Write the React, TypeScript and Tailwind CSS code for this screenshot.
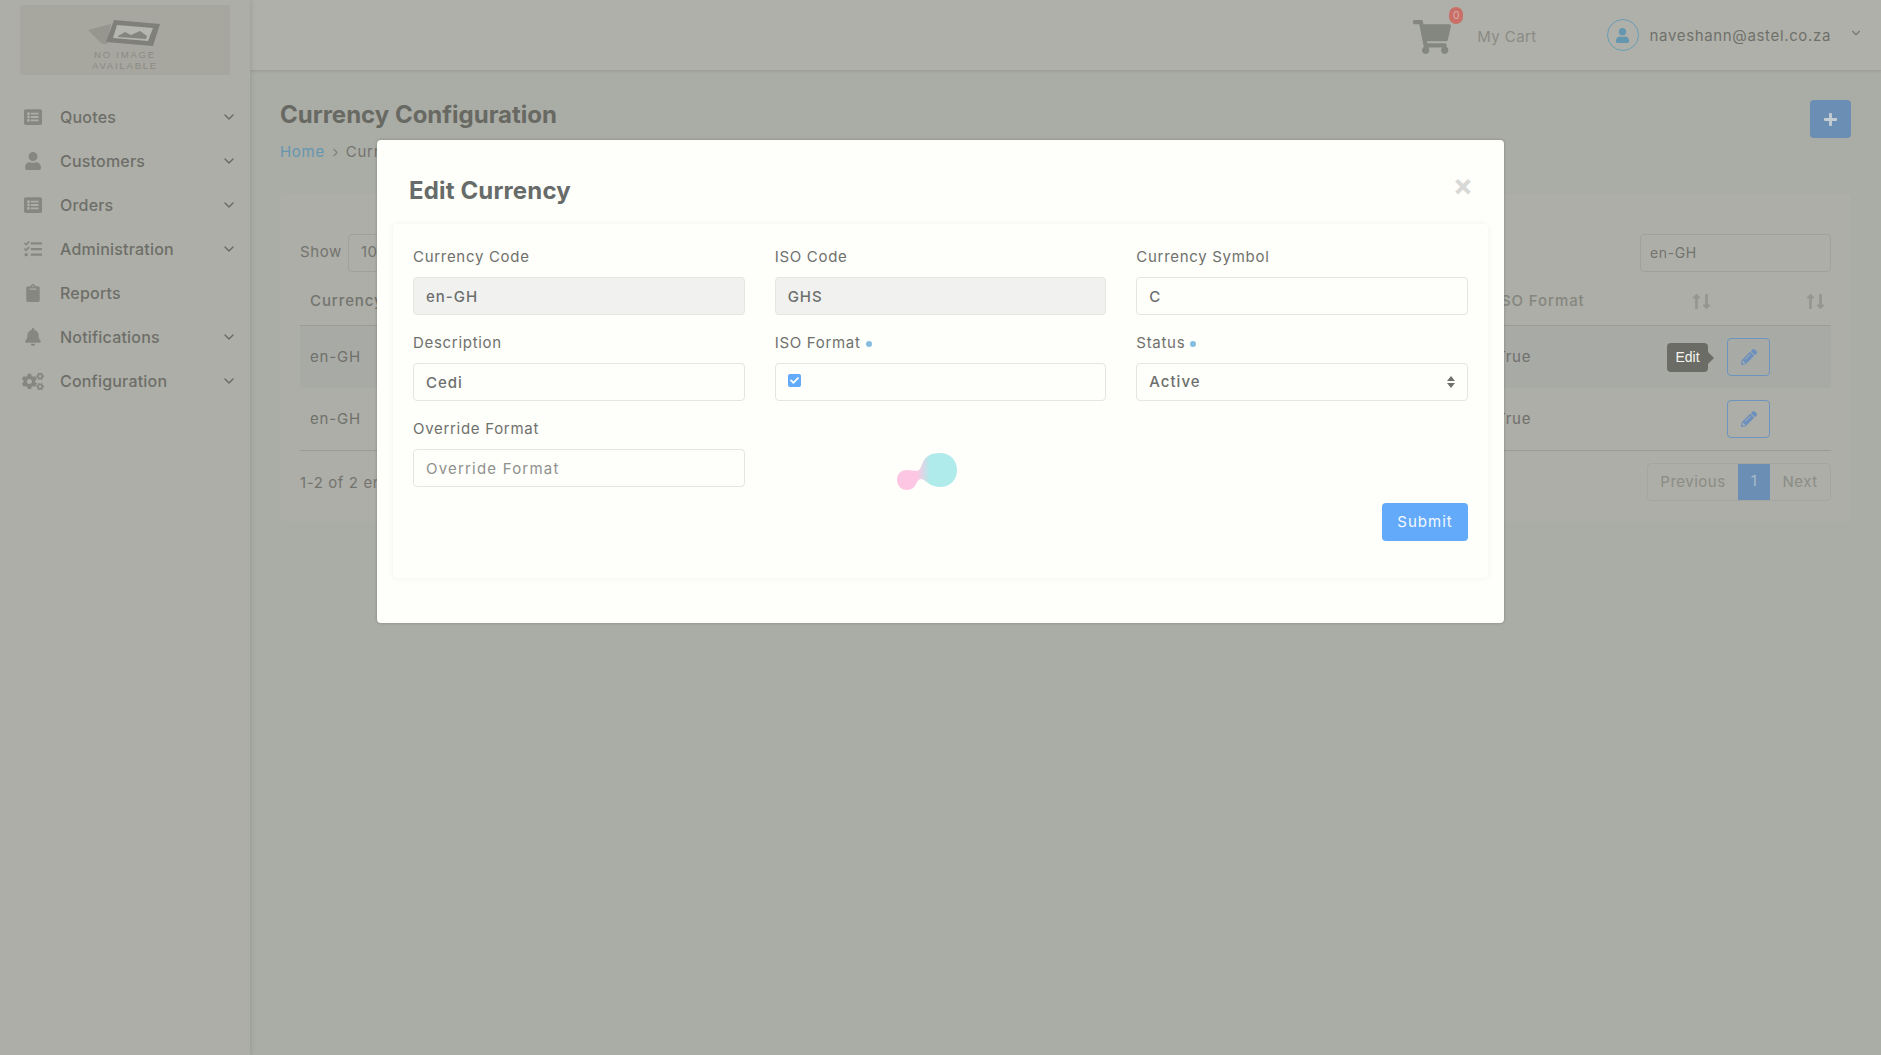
import { ChevronDown, ChevronRight } from "lucide-react";
import {
  FaListAlt, FaUser, FaTasks, FaClipboard, FaBell, FaCogs, FaShoppingCart,
  FaPencilAlt, FaPlus, FaLongArrowAltUp, FaLongArrowAltDown, FaCheck,
} from "react-icons/fa";

const menu = [
  { label: "Quotes", Icon: FaListAlt, chevron: true },
  { label: "Customers", Icon: FaUser, chevron: true },
  { label: "Orders", Icon: FaListAlt, chevron: true },
  { label: "Administration", Icon: FaTasks, chevron: true },
  { label: "Reports", Icon: FaClipboard, chevron: false },
  { label: "Notifications", Icon: FaBell, chevron: true },
  { label: "Configuration", Icon: FaCogs, chevron: true },
];

function Logo() {
  return (
    <div className="mx-[20px] mt-[5px] flex h-[70px] w-[210px] flex-col items-center bg-[#a7a69f]">
      <svg width="76" height="28" viewBox="0 0 76 28" className="mt-[14px]">
        <path d="M1 11 L24 5 L20 25 L15 25 Z" fill="#96968f" />
        <path d="M27 1 L73 5 L66 27 L19 23 Z" fill="#7f807a" />
        <path d="M30 6 L66 9 L61 22 L26 19 Z" fill="#b5b6af" />
        <path d="M31 17 L38 13 L44 16 L53 12 L60 17 L59 20 L31 18 Z" fill="#84857f" />
      </svg>
      <div className="mt-[3px] text-center font-['Liberation_Sans',sans-serif] text-[9.5px] leading-[10.5px] font-normal tracking-[1.8px] text-[#8a8b84]">
        NO IMAGE
        <br />
        AVAILABLE
      </div>
    </div>
  );
}

function Sidebar() {
  return (
    <aside className="z-10 h-[1055px] w-[250px] shrink-0 bg-[#adaea7] shadow-[1px_0_5px_rgba(0,0,0,0.1)]">
      <Logo />
      <nav className="mt-[20px]">
        {menu.map(({ label, Icon, chevron }) => (
          <div key={label} className="flex h-[44px] items-center pr-[13px] pl-[22px]">
            <span className="flex w-[22px] justify-center text-[#868880]">
              <Icon size={label === "Configuration" ? 23 : 18} />
            </span>
            <span className="mt-[-1px] ml-[16px] flex-1 text-[16px] font-medium tracking-[0.2px] text-[#6d6e69]">{label}</span>
            {chevron && <ChevronDown size={16} strokeWidth={2} className="text-[#686963]" />}
          </div>
        ))}
      </nav>
    </aside>
  );
}

function Header() {
  return (
    <header className="flex h-[70px] items-center justify-end bg-[#afb0a9] pr-[18px] shadow-[0_1px_3px_rgba(0,0,0,0.12)]">
      <div className="relative mt-[3px] mr-[26px] text-[#848780]">
        <FaShoppingCart size={38} />
        <span className="absolute top-[-11px] right-[-12px] flex h-[17px] w-[14px] items-center justify-center rounded-full bg-[#c96f68] text-[11px] text-[#dba9a3]">
          0
        </span>
      </div>
      <span className="mt-[5px] mr-[70px] text-[15px] tracking-[0.4px] text-[#8a8b85]">My Cart</span>
      <span className="flex h-[32px] w-[32px] items-center justify-center rounded-full border border-[#6a9db5] text-[#6596b0]">
        <FaUser size={15} />
      </span>
      <span className="mt-[2px] ml-[11px] text-[15px] tracking-[0.65px] text-[#6f706b]">naveshann@astel.co.za</span>
      <ChevronDown size={14} className="mt-[-4px] ml-[18px] text-[#777872]" />
    </header>
  );
}

function Sort() {
  return (
    <span className="flex justify-end text-[#94968f]">
      <FaLongArrowAltUp size={17} className="mr-[-7px]" />
      <FaLongArrowAltDown size={17} />
    </span>
  );
}

function EditButton() {
  return (
    <span className="flex h-[38px] w-[43px] items-center justify-center rounded-[4px] border border-[#6b95bf] text-[#6b90bd]">
      <FaPencilAlt size={16} />
    </span>
  );
}

function TableRow({ highlighted, tip }: { highlighted?: boolean; tip?: boolean }) {
  return (
    <div className={`grid h-[62px] grid-cols-[1186px_231px_1fr] items-center text-[15px] tracking-[0.8px] text-[#6f706b] ${highlighted ? "bg-[#a8aaa6]" : ""}`}>
      <span className="pt-[2px] pl-[10px]">en-GH</span>
      <span className="pt-[2px] pl-[10px]">True</span>
      <div className="relative pl-[10px]">
        <EditButton />
        {tip && (
          <div className="absolute top-[5px] left-[-50px] flex h-[29px] w-[41px] items-center justify-center rounded-[4px] bg-[#6b6c65] font-['Liberation_Sans',sans-serif] text-[14px] tracking-normal text-[#f5f5f0]">
            Edit
            <span className="absolute top-[9px] right-[-6px] h-0 w-0 border-y-[6px] border-l-[6px] border-y-transparent border-l-[#6b6c65]" />
          </div>
        )}
      </div>
    </div>
  );
}

function Main() {
  return (
    <div className="min-w-0 flex-1">
      <Header />
      <main className="px-[30px] pt-[30px]">
        <div className="flex items-start justify-between">
          <div>
            <h1 className="text-[24px] leading-[30px] font-bold text-[#686963]">Currency Configuration</h1>
            <div className="mt-[11px] flex items-center text-[15px] tracking-[0.7px]">
              <span className="text-[#6596b0]">Home</span>
              <ChevronRight size={13} className="mx-[4px] text-[#80817b]" />
              <span className="text-[#73746f]">Currency Configuration</span>
            </div>
          </div>
          <button className="flex h-[38px] w-[41px] items-center justify-center rounded-[4px] bg-[#6b8eb4] text-[#c4cdd2]">
            <FaPlus size={15} />
          </button>
        </div>
        <section className="mt-[30px] rounded-[4px] bg-[#adaea7] px-[20px] pt-[40px] pb-[20px] text-[15px] text-[#73746f]">
          <div className="flex items-center justify-between">
            <div className="flex items-center tracking-[0.6px]">
              <span>Show</span>
              <span className="ml-[6px] flex h-[38px] w-[80px] items-center rounded-[4px] border border-[#a0a19b] pl-[12px]">10</span>
            </div>
            <span className="flex h-[38px] w-[191px] items-center rounded-[4px] border border-[#a0a19b] pl-[9px] text-[14px] tracking-[0.6px]">en-GH</span>
          </div>
          <div className="mt-[7px] grid h-[47px] grid-cols-[1186px_231px_1fr] items-center border-b border-[#9a9b95] pb-[1px] font-medium tracking-[0.9px]">
            <span className="pl-[10px]">Currency Code</span>
            <div className="flex items-center justify-between pr-[2px] pl-[10px] text-[#85867f]"><span>ISO Format</span><Sort /></div>
            <div className="pr-[2px]"><Sort /></div>
          </div>
          <TableRow highlighted tip />
          <TableRow />
          <div className="flex items-center justify-between border-t border-[#9a9b95] pt-[12px]">
            <span className="mt-[4px] tracking-[0.6px]">1-2 of 2 entries</span>
            <div className="flex h-[38px] items-stretch rounded-[4px] border border-[#a5a69f] pt-[1px] tracking-[0.5px] text-[#8b8c86]">
              <span className="flex w-[90px] items-center justify-center">Previous</span>
              <span className="mt-[-1px] flex w-[32px] items-center justify-center bg-[#6b8eb4] text-[#a9bbcb]">1</span>
              <span className="flex w-[60px] items-center justify-center">Next</span>
            </div>
          </div>
        </section>
      </main>
    </div>
  );
}

function Field({ label, dot, children }: { label: string; dot?: boolean; children: React.ReactNode }) {
  return (
    <div>
      <div className="flex h-[24px] items-center pt-[2px] text-[15px] tracking-[0.7px] text-[#6f716d]">
        {label}
        {dot && <span className="mt-[2px] ml-[5px] h-[6px] w-[6px] rounded-full bg-[#84bde0]" />}
      </div>
      <div className="mt-[9px]">{children}</div>
    </div>
  );
}

function Box({ value, disabled, muted }: { value: string; disabled?: boolean; muted?: boolean }) {
  return (
    <div className={`flex h-[38px] items-center rounded-[4px] border border-[#e4e6e4] pt-[2px] pl-[12px] text-[15px] ${muted ? "font-normal tracking-[1.2px] text-[#8f918e]" : "font-medium tracking-[1px] text-[#6c6f6d]"} ${disabled ? "bg-[#f1f2f0]" : "bg-[#fefefa]"}`}>
      {value}
    </div>
  );
}

function Blob() {
  return (
    <svg width="64" height="40" viewBox="0 0 64 40">
      <defs>
        <linearGradient id="blobFill" x1="0" x2="1" y1="0" y2="0">
          <stop offset="0.34" stopColor="#fdc7e3" />
          <stop offset="0.55" stopColor="#aeebea" />
        </linearGradient>
      </defs>
      <path
        d="M11 38 C5 38 1 33 1 28 C1 22 5 18 11 18 C15 18 17 19 20 19 C24 19 25 15 27 10 C30 4 35 1 44 1 C54 1 61 8 61 18 C61 28 54 35 44 35 C36 35 32 31 28 28 C25 26 23 27 21 30 C19 35 16 38 11 38 Z"
        fill="url(#blobFill)"
      />
    </svg>
  );
}

function Modal() {
  return (
    <div className="absolute top-[140px] left-[377px] h-[483px] w-[1127px] rounded-[4px] bg-[#fefefa] px-[16px] shadow-[0_0_3px_rgba(0,0,0,0.25)]">
      <div className="flex h-[84px] items-start justify-between pr-[16px] pl-[16px]">
        <h2 className="mt-[33px] text-[24px] leading-[36px] font-bold tracking-[0.15px] text-[#676b69]">Edit Currency</h2>
        <span className="mt-[30px] mr-[-1px] text-[30px] leading-[30px] font-bold text-[#d8d9d6]">×</span>
      </div>
      <div className="relative h-[354px] rounded-[4px] bg-[#fefefa] px-[20px] pt-[20px] shadow-[0_0_6px_rgba(0,0,0,0.06)]">
        <div className="grid grid-cols-3 gap-x-[30px] gap-y-[15px]">
          <Field label="Currency Code"><Box value="en-GH" disabled /></Field>
          <Field label="ISO Code"><Box value="GHS" disabled /></Field>
          <Field label="Currency Symbol"><Box value="C" /></Field>
          <Field label="Description"><Box value="Cedi" /></Field>
          <Field label="ISO Format" dot>
            <div className="flex h-[38px] items-start rounded-[4px] border border-[#e4e6e4] pt-[10px] pl-[12px]">
              <span className="flex h-[13px] w-[13px] items-center justify-center rounded-[2px] bg-[#63aafa] text-white"><FaCheck size={9} /></span>
            </div>
          </Field>
          <Field label="Status" dot>
            <div className="flex h-[38px] items-center justify-between rounded-[4px] border border-[#e4e6e4] pr-[12px] pl-[12px] text-[15px] font-medium tracking-[1px] text-[#6c6f6d]">
              <span className="pt-[1px]">Active</span>
              <svg width="8" height="12" viewBox="0 0 8 12" fill="#6e706e"><path d="M4 0 L8 5 H0 Z M0 7 H8 L4 12 Z" /></svg>
            </div>
          </Field>
          <Field label="Override Format"><Box value="Override Format" muted /></Field>
          <div className="flex items-end justify-start pl-[121px]">
            <div className="mb-[-5px]"><Blob /></div>
          </div>
        </div>
        <div className="mt-[16px] flex justify-end">
          <button className="h-[38px] w-[86px] rounded-[4px] bg-[#63aafa] text-[15px] font-normal tracking-[1px] text-[#f4f9fd]">Submit</button>
        </div>
      </div>
    </div>
  );
}

export default function App() {
  return (
    <div className="relative flex h-[1055px] w-[1881px] overflow-hidden bg-[#aaaca6] font-['Inter',sans-serif]">
      <Sidebar />
      <Main />
      <Modal />
    </div>
  );
}
